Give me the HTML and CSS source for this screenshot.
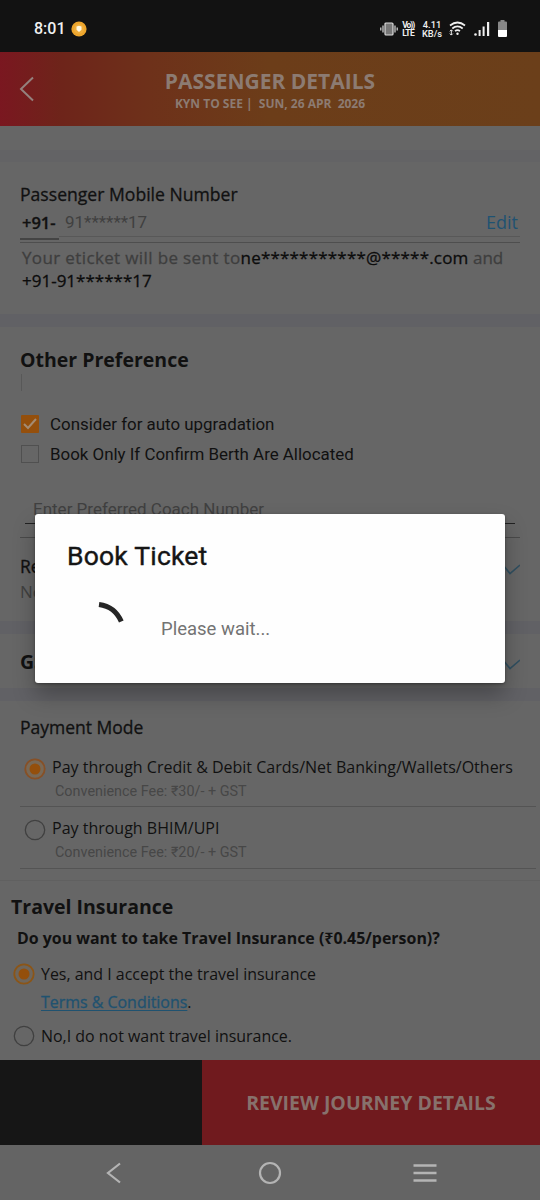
FILE: index.html
```html
<!DOCTYPE html>
<html lang="en">
<head>
<meta charset="utf-8">
<title>Passenger Details</title>
<link rel="stylesheet" href="styles.css">
</head>
<body>
<div class="phone">
  <div class="status">
    <span class="clock">8:01</span>
    <svg class="coin" width="16" height="16" viewBox="0 0 16 16"><circle cx="8" cy="8" r="7.6" fill="#eda52c"/><circle cx="8" cy="8" r="5" fill="#f0ae3c"/><path d="M5.5 5.5 8 4.8l2.500.7v3.200L8 11 5.500 8.700z" fill="#fff8e0"/></svg>
    <svg class="vibrate" width="18" height="14" viewBox="0 0 18 14"><rect x="5" y="1" width="8" height="12" rx="1" fill="#777" stroke="#ddd" stroke-width="1.200"/><path d="M3 3.500v7M15 3.500v7M.8 5.500v3M17.200 5.500v3" stroke="#ddd" stroke-width="1.200"/></svg>
    <span class="tiny volte"><span class="vo">Vo))</span><br>LTE</span>
    <span class="tiny speed">4.11<br>KB/s</span>
    <svg class="wifi" width="17" height="15" viewBox="0 0 17 15" fill="none" stroke="#eee" stroke-width="1.700"><path d="M1 4.500Q8.500-1.500 16 4.500M3.300 7.500Q8.500 3.200 13.700 7.500M6 10.200Q8.500 8.200 11 10.200"/><circle cx="8.500" cy="12.800" r="1.200" fill="#eee" stroke="none"/><path d="M2.300 9v5M.8 10.300 2.300 8.800l1.500 1.500M.8 12.600l1.500 1.500 1.500-1.500" stroke-width="1"/></svg>
    <svg class="signal" width="16" height="14" viewBox="0 0 16 14" fill="#eee"><circle cx="1.500" cy="12.500" r="1.300"/><rect x="4.600" y="8" width="2" height="6"/><rect x="8.600" y="4.500" width="2" height="9.500"/><rect x="13" y="0" width="2.200" height="14"/></svg>
    <svg class="battery" width="9" height="17" viewBox="0 0 9 17"><path d="M2.500 0h4v1.500H8q1 0 1 1V10H0V2.500q0-1 1-1h1.500z" fill="#888"/><path d="M0 10h9v6q0 1-1 1H1q-1 0-1-1z" fill="#fff"/></svg>
  </div>

  <header class="header">
    <svg class="back" width="16" height="26" viewBox="0 0 16 26"><path d="M14 1.500 2 13 14 24.500" fill="none" stroke="#94817d" stroke-width="2"/></svg>
    <div class="titles">
      <h1 class="title">PASSENGER DETAILS</h1>
      <div class="route">KYN TO SEE |&nbsp; SUN, 26 APR&nbsp; 2026</div>
    </div>
  </header>

  <main class="content">
    <div class="band band-top"></div>
    <section class="mobile">
      <h2 class="label passenger">Passenger Mobile Number</h2>
      <div class="number-row">
        <span class="code">+91-</span><span class="number">91******17</span><span class="edit">Edit</span>
      </div>
      <p class="eticket"><span class="sent">Your eticket will be sent to</span><b class="mail">ne***********@*****.com</b> and<br><b>+91-91******17</b></p>
    </section>
    <div class="band"></div>
    <section class="preference">
      <h2 class="heading">Other Preference</h2>
      <div class="caret"></div>
      <div class="check-row">
        <svg width="18" height="18" viewBox="0 0 18 18"><rect width="18" height="18" rx="1" fill="#944f0c"/><path d="M3 9l4 4 8-9" fill="none" stroke="#a48b72" stroke-width="2"/></svg>
        <span>Consider for auto upgradation</span>
      </div>
      <div class="check-row">
        <svg width="18" height="18" viewBox="0 0 18 18"><rect x=".5" y=".5" width="17" height="17" fill="none" stroke="#505050"/></svg>
        <span>Book Only If Confirm Berth Are Allocated</span>
      </div>
      <div class="coach">Enter Preferred Coach Number</div>
    </section>
    <section class="reservation">
      <div>
        <h2 class="label">Reservation Choice</h2>
        <div class="none">None</div>
      </div>
      <svg class="chevron" width="20" height="12" viewBox="0 0 20 12"><path d="M2 1l7 8.500L19 1" transform="translate(1 1)" fill="none" stroke="#304f60" stroke-width="1.600"/></svg>
    </section>
    <div class="band"></div>
    <section class="gst">
      <h2 class="heading">GST Details</h2>
      <svg class="chevron" width="20" height="12" viewBox="0 0 20 12"><path d="M2 1l7 8.500L19 1" transform="translate(1 1)" fill="none" stroke="#304f60" stroke-width="1.600"/></svg>
    </section>
    <div class="band"></div>
    <section class="payment">
      <h2 class="label">Payment Mode</h2>
      <div class="pay">
        <svg class="radio" width="22" height="22" viewBox="0 0 22 22"><circle cx="11" cy="11" r="9.700" fill="#786957" stroke="#875026" stroke-width="1.800"/><circle cx="11" cy="11" r="5.500" fill="#944f0c"/></svg>
        <div><div class="option">Pay through Credit &amp; Debit Cards/Net Banking/Wallets/Others</div><div class="fee">Convenience Fee: ₹30/- + GST</div></div>
      </div>
      <div class="pay">
        <svg class="radio" width="22" height="22" viewBox="0 0 22 22"><circle cx="11" cy="11" r="9.700" fill="none" stroke="#404040" stroke-width="1.300"/></svg>
        <div><div class="option">Pay through BHIM/UPI</div><div class="fee">Convenience Fee: ₹20/- + GST</div></div>
      </div>
    </section>
    <section class="insurance">
      <h2 class="heading travel">Travel Insurance</h2>
      <div class="question">Do you want to take Travel Insurance (₹0.45/person)?</div>
      <div class="choice">
        <svg class="radio" width="22" height="22" viewBox="0 0 22 22"><circle cx="11" cy="11" r="9.700" fill="#6e665c" stroke="#8b5517" stroke-width="1.800"/><circle cx="11" cy="11" r="5.500" fill="#944f0c"/></svg>
        <span>Yes, and I accept the travel insurance</span>
      </div>
      <div class="terms"><span class="link">Terms &amp; Conditions</span>.</div>
      <div class="choice">
        <svg class="radio" width="22" height="22" viewBox="0 0 22 22"><circle cx="11" cy="11" r="9.700" fill="none" stroke="#404040" stroke-width="1.300"/></svg>
        <span>No,I do not want travel insurance.</span>
      </div>
    </section>
  </main>

  <footer class="actions"><div class="fare"></div><div class="review"><span>REVIEW JOURNEY DETAILS</span></div></footer>
  <nav class="nav">
    <svg width="16" height="22" viewBox="0 0 16 22"><path d="M14 1.500 2 11 14 20.500" fill="none" stroke="#b4b4b4" stroke-width="2.200"/></svg>
    <svg class="home" width="24" height="24" viewBox="0 0 24 24"><circle cx="12" cy="12" r="10" fill="none" stroke="#b4b4b4" stroke-width="2.200"/></svg>
    <svg width="24" height="20" viewBox="0 0 24 20"><path d="M.5 2.500h23M.5 10h23M.5 17.500h23" stroke="#b4b4b4" stroke-width="2.500"/></svg>
  </nav>

  <div class="dialog">
    <h2 class="dialog-title">Book Ticket</h2>
    <div class="progress">
      <svg class="spinner" width="30" height="26" viewBox="0 0 30 26"><path d="M2 4.400Q18 6.500 24.300 21.500" fill="none" stroke="#262626" stroke-width="5"/></svg>
      <span class="wait">Please wait...</span>
    </div>
  </div>
</div>
</body>
</html>
```
FILE: styles.css
```css
* { box-sizing: border-box; }
body, h1, h2, p { margin: 0; }
body { background: #666; }
.phone { position: relative; width: 540px; height: 1200px; overflow: hidden; display: flex; flex-direction: column; background: #666; color: #111; font-family: "Open Sans", "Noto Sans", sans-serif; white-space: nowrap; }
svg { display: block; flex: none; }

.status { height: 52px; flex: none; background: #121212; display: flex; align-items: center; padding: 5px 33px 0 34px; color: #f0f0f0; font-family: Roboto, sans-serif; }
.clock { font-size: 16px; font-weight: 500; width: 38px; }
.vibrate { margin-left: 293px; margin-right: 4px; }
.tiny { font-size: 8.5px; line-height: 8px; font-weight: 700; text-align: center; }
.volte { width: 14px; letter-spacing: -0.5px; }
.vo { letter-spacing: -1px; }
.speed { width: 20px; margin-left: 7px; font-size: 9.3px; line-height: 9px; font-weight: 500; }
.wifi { margin-left: 7px; }
.signal { margin-left: 8px; }
.battery { margin-left: 8px; }

.header { height: 74px; flex: none; display: flex; background: linear-gradient(90deg, #7a1720 0, #6e241a 60px, #6e311a 150px, #6c3d19 270px, #6b3f1a 100%); color: #8c7b72; }
.back { margin: 24px 0 0 19px; }
.titles { width: 470px; text-align: center; }
.title { margin-top: 15px; font-size: 21px; line-height: 28px; font-weight: 700; }
.route { font-size: 12px; line-height: 17px; font-weight: 700; }

.content { height: 934px; flex: none; overflow: hidden; }
.band { height: 13px; background: #616165; }
.band-top { margin-top: 24px; height: 12px; background: #636365; }
.label { font-size: 17.5px; line-height: 24px; font-weight: 500; -webkit-text-stroke: 0.3px; }
.passenger { font-size: 17.6px; }
.heading { font-size: 19.5px; line-height: 26px; font-weight: 700; }

.mobile { height: 152px; padding: 20px 20px 0; }
.number-row { display: flex; height: 37px; border-bottom: 1px solid #4e4e4e; line-height: 26px; padding-top: 4px; font-size: 16px; background: linear-gradient(#585858, #585858) 39px 30px / 100% 1px no-repeat; }
.code { width: 39px; padding-left: 2px; height: 30px; font-size: 16.5px; font-weight: 600; border-bottom: 2px solid #444; -webkit-text-stroke: 0.3px; }
.number { margin-left: 6px; color: #404040; font: 17px/24px Roboto, sans-serif; }
.edit { margin-left: auto; margin-right: 2px; font-size: 18px; line-height: 24px; color: #1f5272; }
.eticket { padding: 3px 2px 0; font-size: 17px; line-height: 23px; color: #3e3e3e; font-weight: 500; -webkit-text-stroke: 0.3px; }
.eticket b { color: #0c0c0c; font-weight: 500; }
.sent { letter-spacing: 0.37px; }
.eticket .mail { letter-spacing: 0.19px; }

.preference { height: 211px; margin: 0 20px; padding: 20px 0 0; border-bottom: 1px solid #4a4a4a; }
.caret { width: 1px; height: 17px; margin-top: 1px; background: #585858; margin-left: 1px; }
.check-row { display: flex; align-items: center; height: 30px; gap: 11px; padding-left: 1px; font: 16.9px/24px Roboto, sans-serif; }
.caret + .check-row { margin-top: 18px; }
.coach { margin: 27px 5px 0; padding: 0 8px; height: 28px; border-bottom: 1px solid #222; font: 17px/26px Roboto, sans-serif; color: #404040; }

.reservation { display: flex; justify-content: space-between; height: 83px; padding: 16px 20px; }
.none { font-size: 17px; line-height: 27px; color: #404040; }
.reservation .chevron { margin-top: 9px; }
.gst { display: flex; justify-content: space-between; height: 54px; padding: 15px 20px; }
.gst .chevron { margin-top: 9px; }

.payment { height: 179px; padding: 14px 4px 0 20px; }
.payment .label { height: 30px; }
.pay { display: flex; height: 62px; padding: 10px 0 0 4px; gap: 6px; border-bottom: 1px solid #545454; }
.pay + .pay { padding-top: 9px; }
.pay .radio { margin-top: 3px; }
.option { font-size: 16px; line-height: 24px; }
.fee { margin-left: 3px; font: 14.4px/26px Roboto, sans-serif; color: #474747; }

.insurance { padding: 13px 13px 0; border-top: 1px solid #606060; height: 180px; }
.heading.travel { margin-left: -2px; }
.question { margin: 6px 0 0 4px; font-size: 15.95px; line-height: 24px; font-weight: 700; }
.choice { display: flex; height: 24px; align-items: center; gap: 6px; font-size: 15.95px; line-height: 22px; }
.question + .choice { margin-top: 12px; }
.terms { margin: 4px 0 10px 28px; font-size: 15.95px; line-height: 24px; font-weight: 500; }
.link { color: #1f5270; -webkit-text-stroke: 0.3px; text-decoration: underline; text-decoration-thickness: 1px; text-underline-offset: 2px; }

.actions { height: 85px; flex: none; display: flex; }
.fare { width: 202px; background: #161616; }
.review { flex: 1; display: flex; align-items: center; justify-content: center; background: #701a1e; color: #87716c; font-size: 19.5px; font-weight: 700; }
.nav { height: 55px; flex: none; display: flex; justify-content: space-between; align-items: center; padding: 0 103px 0 106px; background: #646464; }
.home { margin-left: 4px; }

.dialog { position: absolute; left: 35px; top: 514px; width: 470px; height: 169px; padding: 27px 32px; border-radius: 3px; background: #fefefe; box-shadow: 0 12px 22px rgba(0,0,0,.28), 0 1px 3px rgba(0,0,0,.35); font-family: Roboto, sans-serif; }
.dialog-title { font-size: 26.5px; line-height: 30px; font-weight: 400; letter-spacing: 0.2px; color: #151515; -webkit-text-stroke: 0.4px; }
.progress { display: flex; margin-top: 29px; }
.spinner { margin-left: 30px; }
.wait { margin: 18px 0 0 34px; font-size: 18.5px; line-height: 22px; color: #737373; }
```
